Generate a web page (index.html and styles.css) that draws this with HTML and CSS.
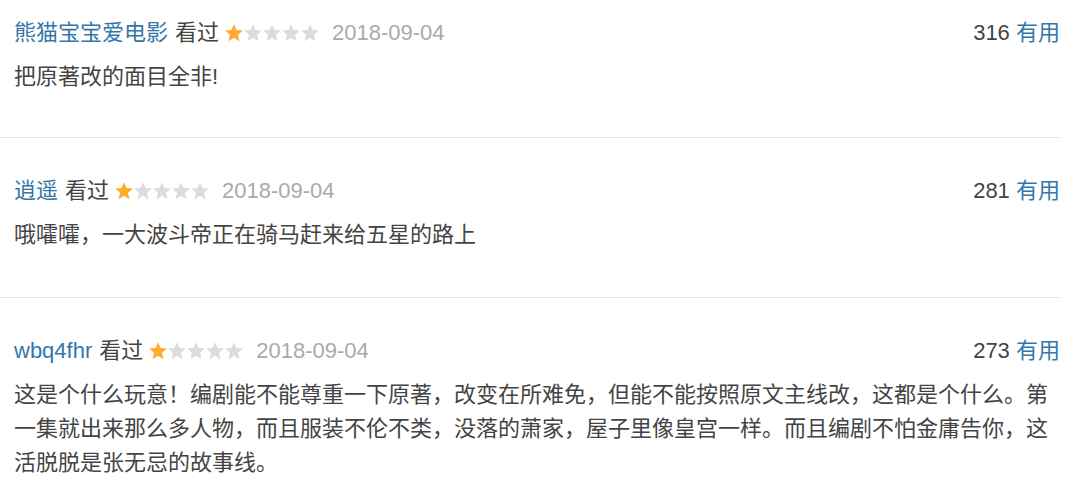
FILE: index.html
```html
<!DOCTYPE html>
<html lang="zh-CN">
<head>
<meta charset="utf-8">
<title>短评</title>
<link rel="stylesheet" href="styles.css">
</head>
<body>
<div class="comments">
  <div class="comment first">
    <div class="comment-head">
      <div class="meta">
        <a class="name">熊猫宝宝爱电影</a>
        <span class="status">看过</span>
        <span class="stars"><svg viewBox="0 0 96 18" width="96" height="18"><g><polygon class="on" points="9,0.2 11.5,6.1 17.9,6.6 13,10.8 14.5,17.3 9,13.8 3.5,17.3 5,10.8 0.1,6.6 6.5,6.1"/><polygon class="off" transform="translate(19 0)" points="9,0.2 11.5,6.1 17.9,6.6 13,10.8 14.5,17.3 9,13.8 3.5,17.3 5,10.8 0.1,6.6 6.5,6.1"/><polygon class="off" transform="translate(38 0)" points="9,0.2 11.5,6.1 17.9,6.6 13,10.8 14.5,17.3 9,13.8 3.5,17.3 5,10.8 0.1,6.6 6.5,6.1"/><polygon class="off" transform="translate(57 0)" points="9,0.2 11.5,6.1 17.9,6.6 13,10.8 14.5,17.3 9,13.8 3.5,17.3 5,10.8 0.1,6.6 6.5,6.1"/><polygon class="off" transform="translate(76 0)" points="9,0.2 11.5,6.1 17.9,6.6 13,10.8 14.5,17.3 9,13.8 3.5,17.3 5,10.8 0.1,6.6 6.5,6.1"/></g></svg></span>
        <span class="date">2018-09-04</span>
      </div>
      <div class="votes"><span class="count">316</span> <a class="useful">有用</a></div>
    </div>
    <p class="text">把原著改的面目全非!</p>
  </div>

  <div class="comment">
    <div class="comment-head">
      <div class="meta">
        <a class="name">逍遥</a>
        <span class="status">看过</span>
        <span class="stars"><svg viewBox="0 0 96 18" width="96" height="18"><g><polygon class="on" points="9,0.2 11.5,6.1 17.9,6.6 13,10.8 14.5,17.3 9,13.8 3.5,17.3 5,10.8 0.1,6.6 6.5,6.1"/><polygon class="off" transform="translate(19 0)" points="9,0.2 11.5,6.1 17.9,6.6 13,10.8 14.5,17.3 9,13.8 3.5,17.3 5,10.8 0.1,6.6 6.5,6.1"/><polygon class="off" transform="translate(38 0)" points="9,0.2 11.5,6.1 17.9,6.6 13,10.8 14.5,17.3 9,13.8 3.5,17.3 5,10.8 0.1,6.6 6.5,6.1"/><polygon class="off" transform="translate(57 0)" points="9,0.2 11.5,6.1 17.9,6.6 13,10.8 14.5,17.3 9,13.8 3.5,17.3 5,10.8 0.1,6.6 6.5,6.1"/><polygon class="off" transform="translate(76 0)" points="9,0.2 11.5,6.1 17.9,6.6 13,10.8 14.5,17.3 9,13.8 3.5,17.3 5,10.8 0.1,6.6 6.5,6.1"/></g></svg></span>
        <span class="date">2018-09-04</span>
      </div>
      <div class="votes"><span class="count">281</span> <a class="useful">有用</a></div>
    </div>
    <p class="text">哦嚯嚯，一大波斗帝正在骑马赶来给五星的路上</p>
  </div>

  <div class="comment">
    <div class="comment-head">
      <div class="meta">
        <a class="name">wbq4fhr</a>
        <span class="status">看过</span>
        <span class="stars"><svg viewBox="0 0 96 18" width="96" height="18"><g><polygon class="on" points="9,0.2 11.5,6.1 17.9,6.6 13,10.8 14.5,17.3 9,13.8 3.5,17.3 5,10.8 0.1,6.6 6.5,6.1"/><polygon class="off" transform="translate(19 0)" points="9,0.2 11.5,6.1 17.9,6.6 13,10.8 14.5,17.3 9,13.8 3.5,17.3 5,10.8 0.1,6.6 6.5,6.1"/><polygon class="off" transform="translate(38 0)" points="9,0.2 11.5,6.1 17.9,6.6 13,10.8 14.5,17.3 9,13.8 3.5,17.3 5,10.8 0.1,6.6 6.5,6.1"/><polygon class="off" transform="translate(57 0)" points="9,0.2 11.5,6.1 17.9,6.6 13,10.8 14.5,17.3 9,13.8 3.5,17.3 5,10.8 0.1,6.6 6.5,6.1"/><polygon class="off" transform="translate(76 0)" points="9,0.2 11.5,6.1 17.9,6.6 13,10.8 14.5,17.3 9,13.8 3.5,17.3 5,10.8 0.1,6.6 6.5,6.1"/></g></svg></span>
        <span class="date">2018-09-04</span>
      </div>
      <div class="votes"><span class="count">273</span> <a class="useful">有用</a></div>
    </div>
    <p class="text">这是个什么玩意！编剧能不能尊重一下原著，改变在所难免，但能不能按照原文主线改，这都是个什么。第一集就出来那么多人物，而且服装不伦不类，没落的萧家，屋子里像皇宫一样。而且编剧不怕金庸告你，这活脱脱是张无忌的故事线。</p>
  </div>
</div>
</body>
</html>
```

FILE: styles.css
```css
html, body {
  margin: 0;
  padding: 0;
  background: #ffffff;
}

body {
  font-family: "Liberation Sans", "Noto Sans CJK SC", sans-serif;
  font-size: 22px;
  color: #444444;
  overflow: hidden;
}

.comments {
  width: 1060px;
}

.comment {
  padding: 36px 0 45px 14px;
  border-bottom: 1px solid #e6e6e6;
}

.comment.first {
  padding-top: 16px;
  padding-bottom: 43px;
}

.comment:last-child {
  padding-bottom: 18px;
  border-bottom: none;
}

.comment-head {
  display: flex;
  justify-content: space-between;
  align-items: center;
  height: 34px;
  line-height: 34px;
}

.meta {
  display: flex;
  align-items: center;
  white-space: nowrap;
}

.name {
  color: #3377aa;
  text-decoration: none;
}

.status {
  margin-left: 7px;
  color: #444444;
}

.stars {
  display: inline-flex;
  align-items: center;
  margin-left: 6px;
  height: 34px;
}

.stars svg {
  display: block;
}

.stars .on {
  fill: #ffac2d;
}

.stars .off {
  fill: #dcdcdc;
}

.date {
  margin-left: 11px;
  color: #aaaaaa;
}

.votes {
  white-space: nowrap;
  color: #444444;
}

.useful {
  color: #3377aa;
  text-decoration: none;
}

.text {
  margin: 10px 0 0 0;
  line-height: 34px;
  color: #444444;
}
```
